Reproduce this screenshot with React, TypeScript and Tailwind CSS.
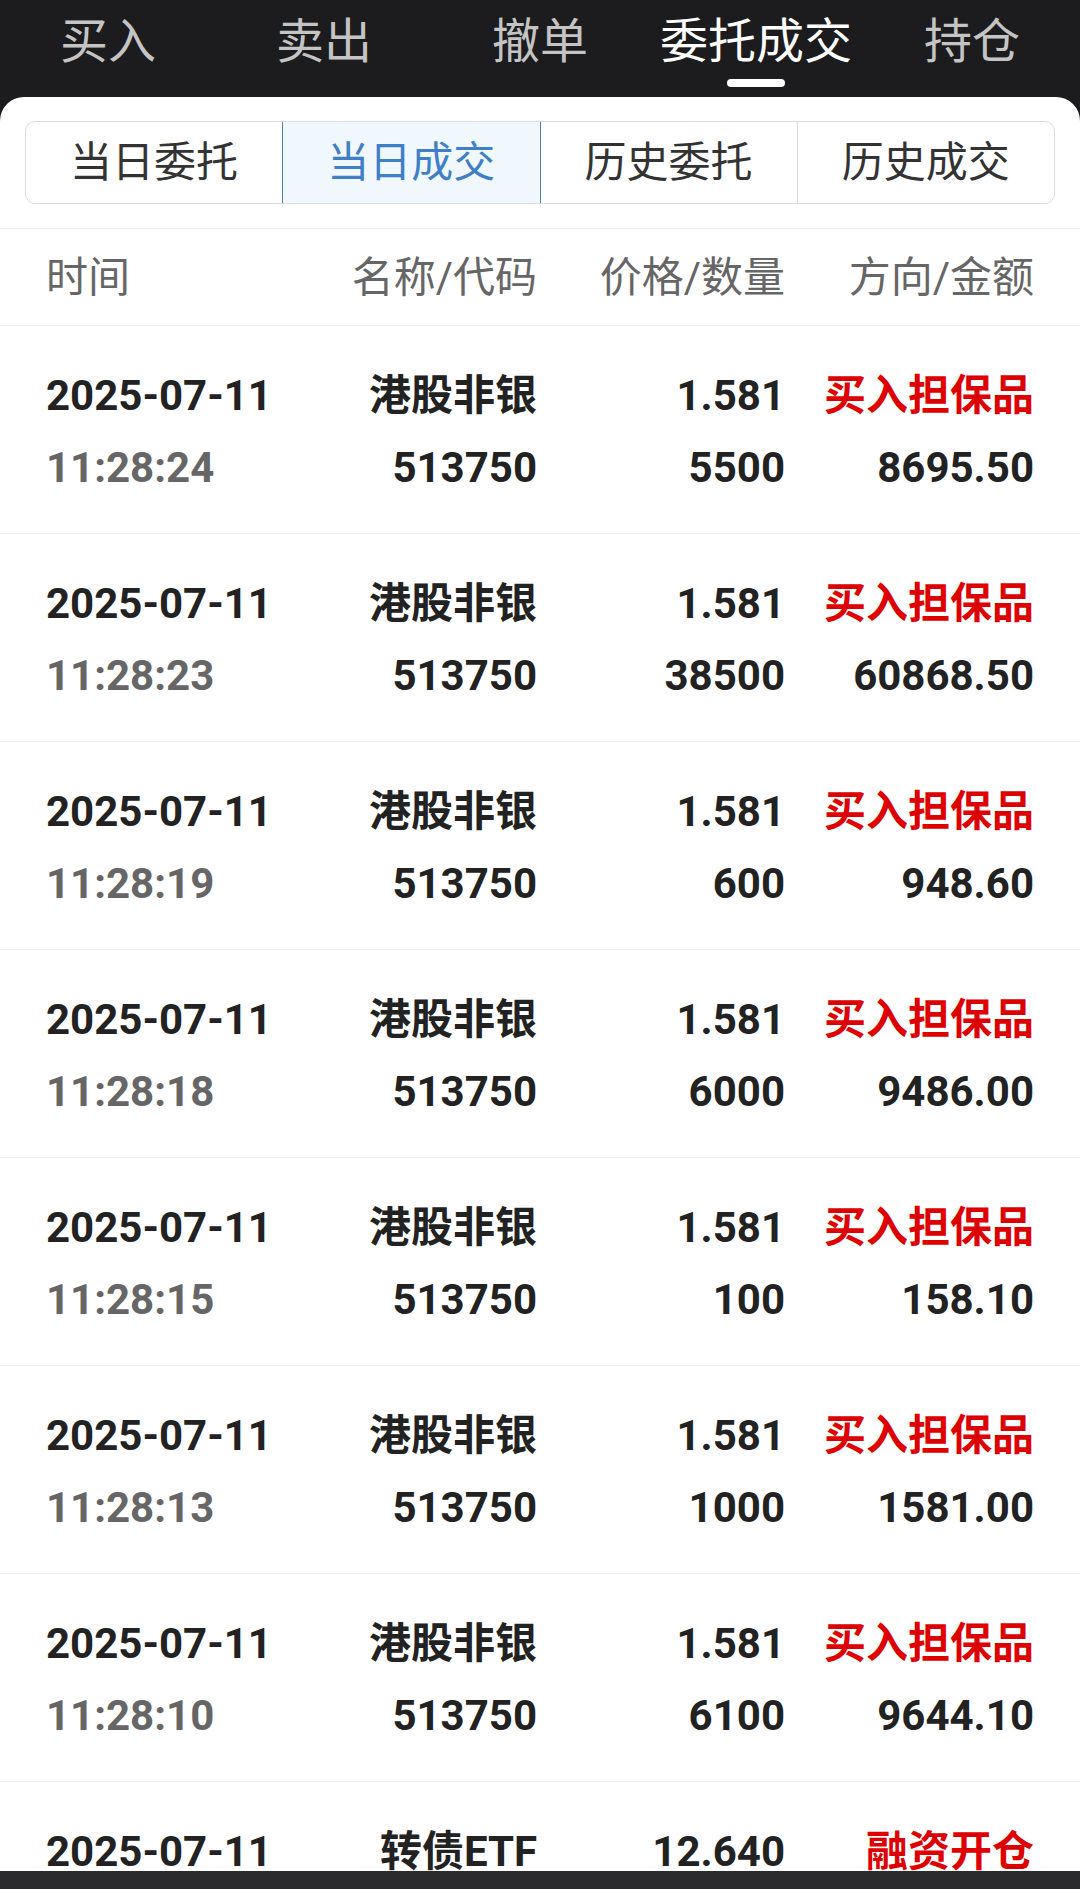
import React from "react";

interface Trade {
  date: string;
  time: string;
  name: string;
  code: string;
  price: string;
  qty: string;
  side: string;
  amount: string;
}

const trades: Trade[] = [
  { date: "2025-07-11", time: "11:28:24", name: "港股非银", code: "513750", price: "1.581", qty: "5500", side: "买入担保品", amount: "8695.50" },
  { date: "2025-07-11", time: "11:28:23", name: "港股非银", code: "513750", price: "1.581", qty: "38500", side: "买入担保品", amount: "60868.50" },
  { date: "2025-07-11", time: "11:28:19", name: "港股非银", code: "513750", price: "1.581", qty: "600", side: "买入担保品", amount: "948.60" },
  { date: "2025-07-11", time: "11:28:18", name: "港股非银", code: "513750", price: "1.581", qty: "6000", side: "买入担保品", amount: "9486.00" },
  { date: "2025-07-11", time: "11:28:15", name: "港股非银", code: "513750", price: "1.581", qty: "100", side: "买入担保品", amount: "158.10" },
  { date: "2025-07-11", time: "11:28:13", name: "港股非银", code: "513750", price: "1.581", qty: "1000", side: "买入担保品", amount: "1581.00" },
  { date: "2025-07-11", time: "11:28:10", name: "港股非银", code: "513750", price: "1.581", qty: "6100", side: "买入担保品", amount: "9644.10" },
  { date: "2025-07-11", time: "11:28:08", name: "转债ETF", code: "511380", price: "12.640", qty: "1000", side: "融资开仓", amount: "12640.00" },
];

const topTabs = ["买入", "卖出", "撤单", "委托成交", "持仓"];
const subTabs = ["当日委托", "当日成交", "历史委托", "历史成交"];

const FONT = "font-['Roboto','Noto_Sans_CJK_SC',sans-serif]";

export default function App() {
  return (
    <div className={`w-[1080px] h-[1889px] bg-[#1c1c1e] flex flex-col overflow-hidden ${FONT}`}>
      {/* Top tabs */}
      <div className="h-[97px] grid grid-cols-5 shrink-0">
        {topTabs.map((t, i) => (
          <div key={t} className="relative">
            <div
              className={`h-[84px] flex items-center justify-center text-[48px] ${
                i === 3 ? "text-white" : "text-[#c4c4c4]"
              }`}
            >
              {t}
            </div>
            {i === 3 && (
              <div className="absolute top-[79px] left-1/2 -translate-x-1/2 w-[58px] h-[8px] rounded-full bg-white"></div>
            )}
          </div>
        ))}
      </div>

      {/* Panel */}
      <div className="flex-1 bg-white rounded-t-[24px] overflow-hidden">
        <div className="mt-[24px] mx-[25px] h-[83px] flex border border-[#dcdcdc] rounded-[10px] overflow-hidden">
          {subTabs.map((t, i) => (
            <div
              key={t}
              className={`flex-1 flex items-center justify-center text-[42px] ${
                i === 1
                  ? "bg-[#f0f7fd] text-[#3f7fc6] border border-[#4d7fa0] -my-px"
                  : "text-[#333]"
              } ${i === 3 ? "border-l border-[#dcdcdc]" : ""}`}
            >
              {t}
            </div>
          ))}
        </div>

        <div className="mt-[24px] border-t border-[#efefef]"></div>

        {/* Column headers */}
        <div className="h-[97px] px-[46px] grid grid-cols-[244px_247px_248px_1fr] items-center text-[42px] text-[#666] border-b border-[#efefef]">
          <span>时间</span>
          <span className="text-right">名称/代码</span>
          <span className="text-right">价格/数量</span>
          <span className="text-right">方向/金额</span>
        </div>

        {/* Rows */}
        {trades.map((r, i) => (
          <div key={i} className="h-[208px] border-b border-[#efefef] px-[46px] pt-[34px]">
            <div className="grid grid-cols-[244px_247px_248px_1fr] leading-[72px] text-[42px] font-bold text-[#222]">
              <span>{r.date}</span>
              <span className="text-right">{r.name}</span>
              <span className="text-right">{r.price}</span>
              <span className="text-right text-[#dd0000]">{r.side}</span>
              <span className="text-[#666]">{r.time}</span>
              <span className="text-right">{r.code}</span>
              <span className="text-right">{r.qty}</span>
              <span className="text-right">{r.amount}</span>
            </div>
          </div>
        ))}
      </div>

      <div className="h-[18px] bg-[#2b2b2d] shrink-0"></div>
    </div>
  );
}
